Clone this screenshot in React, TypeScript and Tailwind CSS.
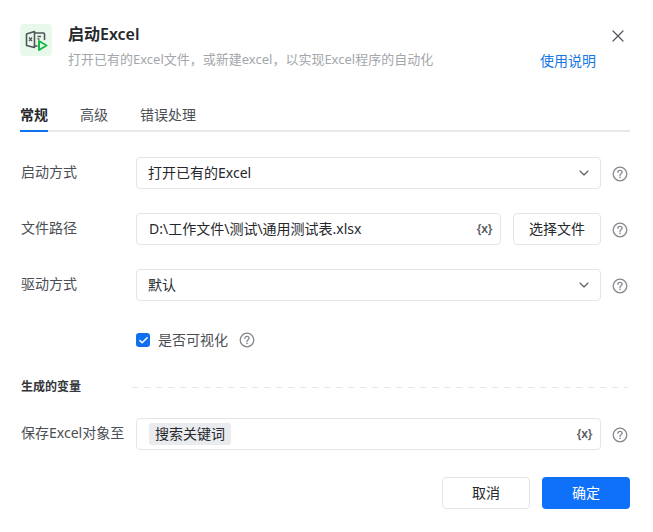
import { ChevronDown, X, Check } from "lucide-react";

function Help() {
  return (
    <svg width="16" height="16" viewBox="0 0 16 16" fill="none" stroke="#85888e" strokeWidth="1.3" className="shrink-0">
      <circle cx="8" cy="8" r="6.8" />
      <path d="M5.9 6.3c0-1.2 1-2 2.1-2s2.1.8 2.1 1.9c0 1.6-2.1 1.6-2.1 3.3" strokeLinecap="round" />
      <circle cx="8" cy="11.4" r=".8" fill="#85888e" stroke="none" />
    </svg>
  );
}

function VarMark() {
  return <span className="text-[12px] font-semibold text-[#55585e] tracking-[-0.3px] shrink-0">{"{x}"}</span>;
}

function Row({ label, children, mt = "mt-6" }: { label: string; children: React.ReactNode; mt?: string }) {
  return (
    <div className={`flex items-center h-8 ${mt}`}>
      <div className="w-[116px] pl-px pb-0.5 text-sm text-[#4b4e54] whitespace-nowrap">{label}</div>
      <div className="flex-1 flex items-center gap-3 min-w-0">{children}</div>
      <div className="w-[29px] pl-[11px] pt-0.5"><Help /></div>
    </div>
  );
}

function SelectBox({ value }: { value: string }) {
  return (
    <div className="flex-1 h-8 flex items-center justify-between border border-[#e3e5e8] rounded pl-[11px] pr-[8px] text-sm text-[#26282c]">
      <span>{value}</span>
      <ChevronDown size={16} strokeWidth={1.6} className="text-[#55585e]" />
    </div>
  );
}

export default function App() {
  return (
    <div className="w-[653px] h-[532px] bg-white pl-5 pr-[23px] pt-6 font-['Noto_Sans','Noto_Sans_CJK_SC',sans-serif]">
      <div className="flex items-start">
        <div className="w-8 h-8 rounded bg-[#e8f9ec] flex items-center justify-center shrink-0">
          <svg width="24" height="24" viewBox="0 0 24 24" fill="none">
            <path d="M2.5 6 10.5 3.5v16l-8-2z" stroke="#50545b" strokeWidth="1.6" strokeLinejoin="round" />
            <path d="M10.5 5h9a1 1 0 0 1 1 1v5.5M10.5 18h2.5" stroke="#50545b" strokeWidth="1.6" strokeLinecap="round" />
            <path d="M5 9.5l3 3.5M8 9.5l-3 3.5" stroke="#50545b" strokeWidth="1.2" />
            <path d="M13.5 8.5h3.5M13.5 11h2" stroke="#50545b" strokeWidth="1.3" />
            <path d="M15 13 22.5 17.5 15 22z" stroke="#16b84a" strokeWidth="2" strokeLinejoin="round" />
          </svg>
        </div>
        <div className="ml-4 flex-1 min-w-0">
          <div className="text-base font-semibold text-[#26282c] leading-5">启动Excel</div>
          <div className="mt-[5px] text-[13px] text-[#a3a6ab] leading-5 whitespace-nowrap">打开已有的Excel文件，或新建excel，以实现Excel程序的自动化</div>
        </div>
        <div className="flex flex-col items-end w-[90px] mr-[2px] shrink-0">
          <X size={20} strokeWidth={1.5} className="text-[#55585e] mt-0.5" />
          <div className="mt-[5px] mr-8 text-sm text-[#1677e5] leading-5 whitespace-nowrap">使用说明</div>
        </div>
      </div>

      <div className="flex gap-8 mt-[34px] border-b-2 border-[#e6e8eb] w-[610px] text-sm leading-5 text-[#4b4e54] h-[27px]">
        <div className="h-[27px] border-b-2 border-[#1070f0] font-semibold text-[#26282c]">常规</div>
        <div>高级</div>
        <div>错误处理</div>
      </div>

      <Row label="启动方式" mt="mt-[25px]">
        <SelectBox value="打开已有的Excel" />
      </Row>
      <Row label="文件路径">
        <div className="flex-1 h-8 flex items-center justify-between border border-[#e3e5e8] rounded pl-3 pr-2 text-sm text-[#26282c] min-w-0">
          <span className="whitespace-nowrap">D:\工作文件\测试\通用测试表.xlsx</span>
          <VarMark />
        </div>
        <div className="w-[88px] h-8 shrink-0 flex items-center justify-center border border-[#e3e5e8] rounded text-sm text-[#26282c]">选择文件</div>
      </Row>
      <Row label="驱动方式">
        <SelectBox value="默认" />
      </Row>

      <div className="flex items-center h-5 mt-[29px] ml-[116px]">
        <div className="w-[14px] h-[14px] rounded-[3px] bg-[#1070f0] flex items-center justify-center">
          <Check size={11} strokeWidth={3.2} className="text-white" />
        </div>
        <span className="ml-2 text-sm text-[#4b4e54]">是否可视化</span>
        <span className="ml-[11px]"><Help /></span>
      </div>

      <div className="flex items-center h-5 mt-[27px]">
        <div className="w-[112px] pl-px text-xs font-semibold text-[#33363b]">生成的变量</div>
        <div className="w-[496px] h-px bg-[repeating-linear-gradient(90deg,#e3e5e8_0,#e3e5e8_6px,transparent_6px,transparent_12px)]" />
      </div>

      <Row label="保存Excel对象至" mt="mt-[21px]">
        <div className="flex-1 h-8 flex items-center justify-between border border-[#e3e5e8] rounded pl-3 pr-2 text-sm text-[#26282c]">
          <span className="bg-[#e9ebee] rounded-[3px] px-[6px] h-[22px] leading-[22px]">搜索关键词</span>
          <VarMark />
        </div>
      </Row>

      <div className="flex justify-end gap-3 mt-[27px] w-[610px]">
        <div className="w-[88px] h-8 flex items-center justify-center border border-[#e3e5e8] rounded text-sm text-[#26282c]">取消</div>
        <div className="w-[88px] h-8 flex items-center justify-center rounded bg-[#0f70fa] text-sm text-white">确定</div>
      </div>
    </div>
  );
}
